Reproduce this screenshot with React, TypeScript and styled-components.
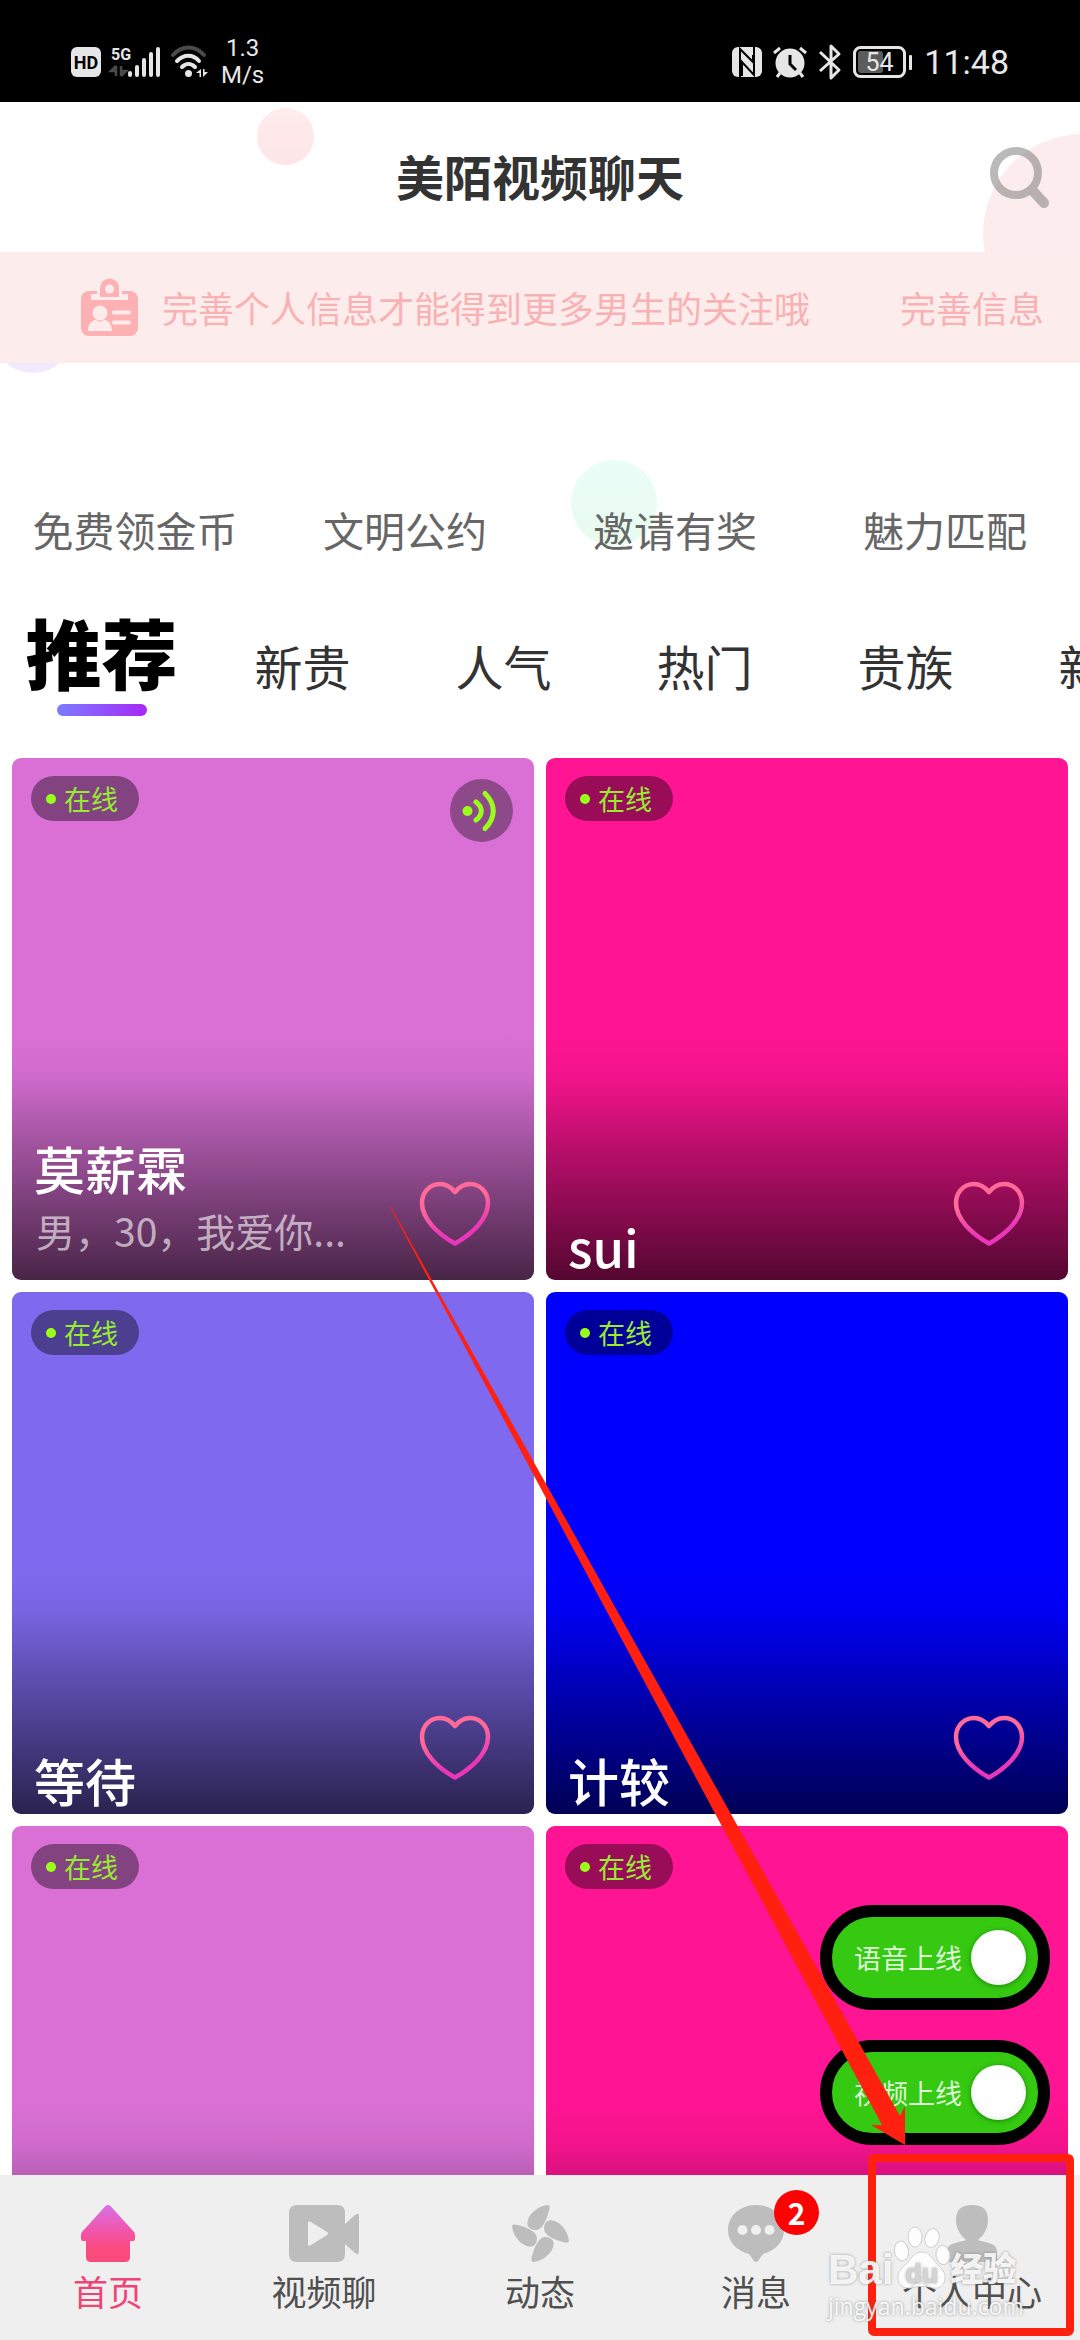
import React, { useState } from 'react';
import styled, { createGlobalStyle, css } from 'styled-components';

const GlobalStyle = createGlobalStyle`
  *, *::before, *::after { box-sizing: border-box; }
  body {
    margin: 0;
    background: #fff;
    font-family: 'Noto Sans CJK SC', 'Noto Sans', sans-serif;
    color: #333;
  }
  button {
    margin: 0;
    padding: 0;
    border: 0;
    background: none;
    font: inherit;
    color: inherit;
    cursor: pointer;
  }
  h1, h2, p { margin: 0; font-weight: 400; }
  a { color: inherit; text-decoration: none; }
  svg { display: block; flex: none; overflow: visible; }
`;

const Screen = styled.div`
  position: relative;
  display: flex;
  flex-direction: column;
  height: 100vh;
  overflow: hidden;
  background: #fff;
`;

/* ---------- status bar ---------- */

const StatusBar = styled.header`
  position: relative;
  display: flex;
  justify-content: space-between;
  align-items: center;
  flex: none;
  height: 102px;
  padding: 22px 71px 0 71px;
  background: #000;
  color: #e8e8e8;
  font-family: Roboto, 'Noto Sans', sans-serif;
`;

const StatusGroup = styled.div<{ $gap: number }>`
  display: flex;
  align-items: center;
  gap: ${(p) => p.$gap}px;
`;

const NetSpeed = styled.div`
  padding-left: 2px;
  font-size: 24px;
  line-height: 27px;
  text-align: center;
`;

const Clock = styled.time`
  font-size: 34px;
  line-height: 40px;
`;

/* ---------- title bar ---------- */

const Backdrop = styled.div`
  position: absolute;
  inset: 0;
  overflow: hidden;
`;

const Bubble = styled.span<{ $size: number; $x: string; $y: number; $fill: string }>`
  position: absolute;
  left: ${(p) => p.$x};
  top: ${(p) => p.$y}px;
  width: ${(p) => p.$size}px;
  height: ${(p) => p.$size}px;
  border-radius: 50%;
  background: ${(p) => p.$fill};
`;

const TitleBar = styled.div`
  position: relative;
  display: grid;
  grid-template-columns: 1fr auto 1fr;
  align-items: center;
  flex: none;
  height: 150px;
  padding: 0 30px;
`;

const Title = styled.h1`
  grid-column: 2;
  padding-bottom: 4px;
  font-size: 48px;
  line-height: 60px;
  font-weight: 700;
  color: #333;
`;

const SearchButton = styled.button`
  justify-self: end;
`;

/* ---------- notice ---------- */

const Notice = styled.div`
  position: relative;
  display: flex;
  align-items: center;
  flex: none;
  height: 111px;
  padding: 0 36px 0 81px;
  background: #fdecec;
  color: #f9b2b4;
  font-size: 36px;
  line-height: 48px;
`;

const NoticeText = styled.p`
  flex: 1;
  padding: 0 0 2px 24px;
  white-space: nowrap;
`;

const NoticeLink = styled.a`
  padding-bottom: 2px;
`;

/* ---------- shortcuts and tabs ---------- */

const Shortcuts = styled.nav`
  position: relative;
  display: grid;
  grid-template-columns: repeat(4, 1fr);
  flex: none;
  padding-top: 144px;
`;

const Shortcut = styled.a`
  font-size: 41px;
  line-height: 44px;
  text-align: center;
  color: #666;
  white-space: nowrap;
`;

const Tabs = styled.div`
  position: relative;
  display: flex;
  align-items: flex-end;
  flex: none;
  margin: 63px 0 42px;
  padding-left: 1px;
`;

const Tab = styled.button<{ $active: boolean }>`
  display: flex;
  flex-direction: column;
  align-items: center;
  flex: 0 0 201px;
  font-size: 48px;
  line-height: 48px;
  gap: 15px;

  &::after {
    content: '';
    width: 90px;
    height: 12px;
    border-radius: 6px;
  }

  ${(p) =>
    p.$active &&
    css`
      color: #000;
      font-size: 76px;
      line-height: 75px;
      font-weight: 900;
      &::after { background: linear-gradient(90deg, #7b7bff, #a729f8); }
    `}
`;

/* ---------- cards ---------- */

const Feed = styled.main`
  position: relative;
  flex: 1;
  min-height: 0;
  overflow: hidden;
`;

const CardGrid = styled.div`
  display: grid;
  grid-template-columns: repeat(2, 1fr);
  gap: 12px;
  padding: 0 12px;
`;

const Card = styled.article<{ $color: string }>`
  display: flex;
  flex-direction: column;
  justify-content: space-between;
  aspect-ratio: 1;
  border-radius: 9px;
  color: #fff;
  background:
    linear-gradient(
      rgba(0, 0, 0, 0) 53%,
      rgba(0, 0, 0, 0.05) 61%,
      rgba(0, 0, 0, 0.28) 75%,
      rgba(0, 0, 0, 0.67) 100%
    ),
    ${(p) => p.$color};
`;

const CardTop = styled.div`
  display: flex;
  justify-content: space-between;
  align-items: flex-start;
  padding: 18px 21px 0 19px;
`;

const OnlinePill = styled.span`
  display: flex;
  align-items: center;
  gap: 8px;
  height: 45px;
  padding: 0 21px 0 15px;
  border-radius: 23px;
  background: rgba(0, 0, 0, 0.4);
  color: #98ec30;
  font-size: 27px;
  line-height: 36px;

  &::before {
    content: '';
    width: 10px;
    height: 10px;
    border-radius: 50%;
    background: #99ff1a;
  }
`;

const VoiceButton = styled.button`
  display: grid;
  place-items: center;
  width: 63px;
  height: 63px;
  margin-top: 3px;
  border-radius: 50%;
  background: rgba(0, 0, 0, 0.35);
`;

const CardBottom = styled.div`
  display: flex;
  justify-content: space-between;
  align-items: flex-end;
  padding: 0 44px 2px 22px;
`;

const Name = styled.h2`
  font-size: 51px;
  line-height: 64px;
  font-weight: 500;
`;

const Bio = styled.p`
  padding: 0 0 18px 2px;
  font-size: 39px;
  line-height: 60px;
  color: rgba(255, 255, 255, 0.6);
  white-space: nowrap;
`;

const LikeButton = styled.button`
  margin-bottom: 32px;
`;

/* ---------- floating switches ---------- */

const Switches = styled.div`
  position: absolute;
  right: 30px;
  bottom: 30px;
  display: grid;
  gap: 30px;
`;

const Switch = styled.label`
  display: flex;
  align-items: center;
  gap: 9px;
  height: 105px;
  padding: 0 12px 0 22px;
  border: 12px solid #000;
  border-radius: 53px;
  background: #35c911;
  color: rgba(255, 255, 255, 0.85);
  font-size: 27px;
  line-height: 36px;
  cursor: pointer;

  &:has(input:not(:checked)) { background: #999; }
`;

const Knob = styled.input`
  appearance: none;
  width: 55px;
  height: 55px;
  margin: 0;
  border-radius: 50%;
  background: radial-gradient(circle at 50% 45%, #fff 55%, #e4e4e4 100%);
  box-shadow: 0 1px 5px rgba(0, 60, 0, 0.5);
`;

/* ---------- bottom navigation ---------- */

const BottomNav = styled.nav`
  position: relative;
  display: grid;
  grid-template-columns: repeat(5, 1fr);
  flex: none;
  height: 165px;
  padding-top: 30px;
  background: #efefef;
`;

const NavItem = styled.button<{ $active: boolean }>`
  display: flex;
  flex-direction: column;
  align-items: center;
  gap: 7px;
  font-size: 35px;
  line-height: 44px;
  color: ${(p) => (p.$active ? '#ee4577' : '#505050')};
`;

const IconSlot = styled.span`
  position: relative;
  display: grid;
  place-items: center;
  height: 57px;
`;

const Badge = styled.span`
  position: absolute;
  left: 46px;
  top: -15px;
  width: 45px;
  height: 45px;
  border-radius: 50%;
  background: #fb0303;
  color: #fff;
  font-size: 30px;
  line-height: 45px;
  font-weight: 700;
  text-align: center;
`;

/* ---------- annotations over the screen ---------- */

const Annotation = styled.div`
  position: absolute;
  right: 0;
  bottom: 0;
  pointer-events: none;
`;

const Arrow = styled.svg`
  position: absolute;
  right: 174px;
  bottom: 195px;
`;

const Highlight = styled.div`
  position: absolute;
  right: 6px;
  bottom: 4px;
  width: 206px;
  height: 182px;
  border: 8px solid #ff2010;
  border-radius: 6px;
`;

const Watermark = styled.div`
  position: absolute;
  right: 60px;
  bottom: 18px;
  width: 192px;
  color: rgba(255, 255, 255, 0.9);
  text-shadow: 0 0 3px rgba(110, 110, 110, 0.7);
  font-family: 'Liberation Sans', 'Noto Sans CJK SC', sans-serif;
  white-space: nowrap;
`;

const WatermarkTop = styled.div`
  display: flex;
  align-items: flex-end;
  height: 58px;
  font-size: 42px;
  line-height: 40px;
  font-weight: 700;
`;

const WatermarkCjk = styled.span`
  font-size: 33px;
  font-weight: 900;
`;

const Paw = styled.span`
  position: relative;
  flex: none;
  width: 57px;
  height: 64px;
`;

const PawText = styled.span`
  position: absolute;
  bottom: 1px;
  width: 100%;
  text-align: center;
  font-size: 27px;
  line-height: 30px;
  color: #d4d4d4;
`;

const WatermarkUrl = styled.div`
  font-family: 'Open Sans', 'Noto Sans', sans-serif;
  font-size: 23px;
  line-height: 32px;
`;

/* ---------- icons ---------- */

const HdIcon = () => (
  <svg width="30" height="30" viewBox="0 0 30 30">
    <rect width="30" height="30" rx="6" fill="#e6e6e6" />
    <text x="15" y="22" textAnchor="middle" fontSize="18" fontWeight="700" fill="#000">HD</text>
  </svg>
);

const SignalIcon = () => (
  <svg width="50" height="32" viewBox="0 0 50 32">
    <text x="0" y="14" fontSize="16" fontWeight="700" fill="#e6e6e6">5G</text>
    <path d="M5 20v10M5 20l-5 5h5M10 20v10M10 30l5-5h-5" stroke="#4a4a4a" strokeWidth="2.5" fill="none" />
    <g fill="#e6e6e6">
      <rect x="17" y="25" width="4" height="6" rx="2" />
      <rect x="24" y="19" width="4" height="12" rx="2" />
      <rect x="31" y="12" width="4" height="19" rx="2" />
      <rect x="38" y="6" width="4" height="25" rx="2" />
      <rect x="45" y="1" width="4" height="30" rx="2" />
    </g>
  </svg>
);

const WifiIcon = () => (
  <svg width="38" height="32" viewBox="0 0 38 32" fill="none" strokeLinecap="round">
    <path d="M2 9C11-1 24-1 33 9" stroke="#4a4a4a" strokeWidth="4" />
    <path d="M6 15C13 8 22 8 28 15" stroke="#e6e6e6" strokeWidth="4" />
    <path d="M11 21C15 17 20 17 24 21" stroke="#e6e6e6" strokeWidth="4" />
    <circle cx="17.500" cy="27.500" r="3.500" fill="#e6e6e6" />
    <path d="M30 23v8h-1.500v-4H25zM32 31v-8h1.500v3H37z" fill="#e6e6e6" />
  </svg>
);

const NfcIcon = () => (
  <svg width="30" height="30" viewBox="0 0 30 30">
    <rect width="30" height="30" rx="6" fill="#e6e6e6" />
    <path d="M8 30V2l13 13V8M22 0v28L10 15v14" fill="none" stroke="#000" strokeWidth="2" />
  </svg>
);

const AlarmIcon = () => (
  <svg width="34" height="32" viewBox="0 0 34 32">
    <circle cx="17" cy="17" r="14.500" fill="#e6e6e6" />
    <path d="M17 9v9l6 6" fill="none" stroke="#000" strokeWidth="3" />
    <path d="M1 7l6-5M33 7l-6-5M7 27l-3 4M27 27l3 4" stroke="#e6e6e6" strokeWidth="3" />
  </svg>
);

const BluetoothIcon = () => (
  <svg width="24" height="36" viewBox="0 0 24 36" fill="none" stroke="#e6e6e6" strokeWidth="3">
    <path d="M2 8l19 18-8 8V2l8 8L2 27" strokeLinejoin="round" />
  </svg>
);

const BatteryIcon = () => (
  <svg width="60" height="34" viewBox="0 0 60 34">
    <rect x="1.500" y="2.500" width="50" height="29" rx="6" fill="none" stroke="#e6e6e6" strokeWidth="3" />
    <rect x="5" y="6" width="25" height="22" rx="3" fill="#5c5c5c" />
    <rect x="56" y="10" width="3" height="15" rx="1" fill="#e6e6e6" />
    <text x="26.500" y="26" textAnchor="middle" fontSize="25" fill="#e6e6e6">54</text>
  </svg>
);

const SearchIcon = () => (
  <svg width="60" height="60" viewBox="0 0 60 60" fill="none" stroke="#808080" opacity=".55">
    <circle cx="26" cy="26" r="22" strokeWidth="8" />
    <path d="M43 44l11 12" strokeWidth="10" strokeLinecap="round" />
  </svg>
);

const IdCardIcon = () => (
  <svg width="57" height="57" viewBox="0 0 57 57">
    <rect y="12" width="57" height="45" rx="8" fill="#fdb1b3" />
    <path d="M10 15v6h37v-6h-7v3H17v-3z" fill="#fdecec" />
    <path d="M16 10h25v8H16z" fill="#fdecec" />
    <path d="M19 18v-9a9.500 9.500 0 0 1 19 0v9z" fill="#fdb1b3" />
    <circle cx="28.500" cy="10" r="4.500" fill="#fdecec" />
    <circle cx="19" cy="34" r="7.500" fill="#fdecec" />
    <path d="M7 52c0-7 4-11 8-11l4 2 4-2c4 0 8 4 8 11z" fill="#fdecec" />
    <path d="M33 33.500h15M33 43.500h15" stroke="#fdecec" strokeWidth="4" strokeLinecap="round" />
  </svg>
);

const VoiceIcon = () => (
  <svg width="63" height="63" viewBox="0 0 63 63" fill="none" stroke="#99ff1a" strokeWidth="5" strokeLinecap="round">
    <circle cx="17.500" cy="32" r="5" fill="#99ff1a" stroke="none" />
    <path d="M26 23C33 28 33 36 26 41" />
    <path d="M35 14.500C46 25 46 39 35 49.500" />
  </svg>
);

const HeartIcon = ({ id }: { id: string }) => (
  <svg width="70" height="64" viewBox="0 0 70 64">
    <defs>
      <linearGradient id={id} x1="0.3" y1="0" x2="0.6" y2="1">
        <stop offset="0.3" stopColor="#ff6a98" />
        <stop offset="0.8" stopColor="#ea36b8" />
      </linearGradient>
    </defs>
    <path
      d="M35 10C30 4 25 2 20 2C9 2 2 11 2 21C2 37 18 52 35 61.500C52 52 68 37 68 21C68 11 61 2 50 2C45 2 40 4 35 10Z"
      fill="none"
      stroke={`url(#${id})`}
      strokeWidth="4.500"
      strokeLinejoin="round"
    />
  </svg>
);

const HomeIcon = () => (
  <svg width="54" height="57" viewBox="0 0 54 57">
    <defs>
      <linearGradient id="home" x1="0" y1="0" x2="0" y2="1">
        <stop offset="0" stopColor="#d971e8" />
        <stop offset="0.5" stopColor="#f352a4" />
        <stop offset="0.8" stopColor="#fb4a7c" />
      </linearGradient>
    </defs>
    <path
      d="M24.500 1Q27-1 29.500 1L53 27Q54 28 54 30V34Q54 36 52 36H49V52Q49 57 44 57H10Q5 57 5 52V36H2Q0 36 0 34V30Q0 28 1 27Z"
      fill="url(#home)"
    />
  </svg>
);

const VideoIcon = () => (
  <svg width="70" height="57" viewBox="0 0 70 57" fill="#bdbdbd">
    <path d="M8 0H48Q56 0 56 8V19L66 10Q70 7 70 11V46Q70 51 66 48L56 39V49Q56 57 48 57H8Q0 57 0 49V8Q0 0 8 0Z" />
    <path d="M19 18Q19 15 22 17L38 27Q40 28.500 38 30L22 40Q19 42 19 39Z" fill="#efefef" />
  </svg>
);

const PinwheelIcon = () => (
  <svg width="57" height="57" viewBox="0 0 57 57" fill="#bdbdbd">
    {[0, 90, 180, 270].map((angle) => (
      <path
        key={angle}
        d="M34 .3C38-.8 38 2 37 6C35 13 33 19 28 23.500C23 27 15 24 15.300 18C16 9 26 1.500 34 .3Z"
        transform={`rotate(${angle} 28.500 28.500)`}
      />
    ))}
  </svg>
);

const MessageIcon = () => (
  <svg width="56" height="57" viewBox="0 0 56 57" fill="#bdbdbd">
    <path d="M28 0C44 0 56 11 56 25C56 38 46 46 35 49L30 56Q28 58 26 56L21 49C10 46 0 38 0 25C0 11 12 0 28 0Z" />
    <g fill="#efefef">
      <circle cx="14.500" cy="25" r="5" />
      <circle cx="28" cy="25" r="5" />
      <circle cx="41.500" cy="25" r="5" />
    </g>
  </svg>
);

const PersonIcon = () => (
  <svg width="50" height="57" viewBox="0 0 50 57" fill="#bdbdbd">
    <path d="M25 0C36 0 41 5 41 15C41 24 36 31 31 35C34 37 50 37 50 46V57H0V46C0 37 16 37 19 35C14 31 9 24 9 15C9 5 14 0 25 0Z" />
  </svg>
);

const PawIcon = () => (
  <svg width="57" height="64" viewBox="0 0 57 64" fill="#fff" fillOpacity=".88" stroke="#b5b5b5" strokeOpacity=".6">
    <ellipse cx="8.500" cy="25" rx="7" ry="10" transform="rotate(-10 8.500 25)" />
    <ellipse cx="22" cy="11" rx="7" ry="10" />
    <ellipse cx="39" cy="12" rx="7" ry="9.500" transform="rotate(14 39 12)" />
    <ellipse cx="50" cy="29" rx="7" ry="9.500" transform="rotate(-8 50 29)" />
    <path d="M29 26C36 26 39 32 43 37C48 42 53 46 52 53C51 60 46 63 40 62C33 60 25 60 19 62C12 63 6 60 5 53C4 45 10 41 15 36C19 31 22 26 29 26Z" />
  </svg>
);

/* ---------- data ---------- */

const shortcuts = ['免费领金币', '文明公约', '邀请有奖', '魅力匹配'];
const tabs = ['推荐', '新贵', '人气', '热门', '贵族', '新人'];

type Person = { name: string; bio?: string; color: string; voice?: boolean };

const people: Person[] = [
  { name: '莫薪霖', bio: '男，30，我爱你...', color: '#da70d6', voice: true },
  { name: 'sui', color: '#ff1493' },
  { name: '等待', color: '#7f69ee' },
  { name: '计较', color: '#0000ff' },
  { name: '', color: '#da70d6' },
  { name: '', color: '#ff1493' },
];

const navItems = [
  { label: '首页', Icon: HomeIcon },
  { label: '视频聊', Icon: VideoIcon },
  { label: '动态', Icon: PinwheelIcon },
  { label: '消息', Icon: MessageIcon, badge: 2 },
  { label: '个人中心', Icon: PersonIcon },
];

const PersonCard = ({ person, index }: { person: Person; index: number }) => (
  <Card $color={person.color}>
    <CardTop>
      <OnlinePill>在线</OnlinePill>
      {person.voice && (
        <VoiceButton aria-label="播放语音">
          <VoiceIcon />
        </VoiceButton>
      )}
    </CardTop>
    <CardBottom>
      <div>
        <Name>{person.name}</Name>
        {person.bio && <Bio>{person.bio}</Bio>}
      </div>
      <LikeButton aria-label="喜欢">
        <HeartIcon id={`heart-${index}`} />
      </LikeButton>
    </CardBottom>
  </Card>
);

export default function App() {
  const [tab, setTab] = useState(0);
  const [page, setPage] = useState(0);

  return (
    <>
      <GlobalStyle />
      <Screen>
        <Backdrop>
          <Bubble $size={57} $x="257px" $y={108} $fill="linear-gradient(#ffeceb, #fde5e8)" />
          <Bubble $size={200} $x="calc(100% - 97px)" $y={134} $fill="#fdeced" />
          <Bubble $size={82} $x="-8px" $y={291} $fill="#f1e9fe" />
          <Bubble $size={86} $x="571px" $y={460} $fill="linear-gradient(#eafdf8, #e9fbee)" />
        </Backdrop>

        <StatusBar>
          <StatusGroup $gap={10}>
            <HdIcon />
            <SignalIcon />
            <WifiIcon />
            <NetSpeed>
              1.3
              <br />
              M/s
            </NetSpeed>
          </StatusGroup>
          <StatusGroup $gap={11}>
            <NfcIcon />
            <AlarmIcon />
            <BluetoothIcon />
            <BatteryIcon />
            <Clock>11:48</Clock>
          </StatusGroup>
        </StatusBar>

        <TitleBar>
          <Title>美陌视频聊天</Title>
          <SearchButton aria-label="搜索">
            <SearchIcon />
          </SearchButton>
        </TitleBar>

        <Notice>
          <IdCardIcon />
          <NoticeText>完善个人信息才能得到更多男生的关注哦</NoticeText>
          <NoticeLink href="#profile">完善信息</NoticeLink>
        </Notice>

        <Shortcuts>
          {shortcuts.map((label) => (
            <Shortcut key={label} href="#shortcut">
              {label}
            </Shortcut>
          ))}
        </Shortcuts>

        <Tabs role="tablist">
          {tabs.map((label, i) => (
            <Tab key={label} role="tab" aria-selected={i === tab} $active={i === tab} onClick={() => setTab(i)}>
              {label}
            </Tab>
          ))}
        </Tabs>

        <Feed>
          <CardGrid>
            {people.map((person, i) => (
              <PersonCard key={i} person={person} index={i} />
            ))}
          </CardGrid>
          <Switches>
            <Switch>
              语音上线
              <Knob type="checkbox" role="switch" defaultChecked />
            </Switch>
            <Switch>
              视频上线
              <Knob type="checkbox" role="switch" defaultChecked />
            </Switch>
          </Switches>
        </Feed>

        <BottomNav>
          {navItems.map(({ label, Icon, badge }, i) => (
            <NavItem key={label} $active={i === page} onClick={() => setPage(i)}>
              <IconSlot>
                <Icon />
                {badge && <Badge>{badge}</Badge>}
              </IconSlot>
              {label}
            </NavItem>
          ))}
        </BottomNav>

        <Annotation>
          <Arrow width="516" height="938" viewBox="0 0 516 938" fill="#ff2010">
            <path d="M0 0L1 0L510 909L515 899V938L481 918H492Z" />
          </Arrow>
          <Highlight />
          <Watermark>
            <WatermarkTop>
              <span>Bai</span>
              <Paw>
                <PawIcon />
                <PawText>du</PawText>
              </Paw>
              <WatermarkCjk>经验</WatermarkCjk>
            </WatermarkTop>
            <WatermarkUrl>jingyan.baidu.com</WatermarkUrl>
          </Watermark>
        </Annotation>
      </Screen>
    </>
  );
}
